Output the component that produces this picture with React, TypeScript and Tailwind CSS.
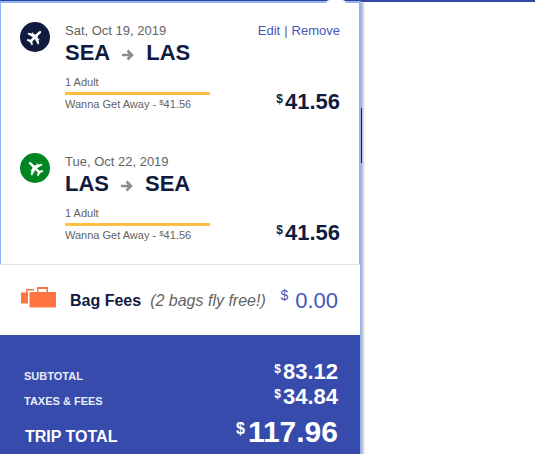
import type { ReactNode } from "react";

type Flight = {
  date: string;
  from: string;
  to: string;
  fare: string;
  color: string;
  turn: string;
  editable: boolean;
};

const flights: Flight[] = [
  { date: "Sat, Oct 19, 2019", from: "SEA", to: "LAS", fare: "41.56", color: "bg-[#111b40]", turn: "rotate-45", editable: true },
  { date: "Tue, Oct 22, 2019", from: "LAS", to: "SEA", fare: "41.56", color: "bg-[#008522]", turn: "-rotate-45", editable: false },
];

function Plane({ turn }: { turn: string }) {
  return (
    <svg viewBox="0 0 24 24" className={"size-[18px] " + turn} fill="white" aria-hidden="true">
      <path d="M12 1C10.900 1 10.300 2.300 10.300 3.600V9L2 14v2.400l8.300-2.300v4.800L7 21v1.900l5-1.200 5 1.200V21l-3.300-2.100v-4.800l8.300 2.300V14l-8.300-5V3.600C13.700 2.300 13.100 1 12 1z" />
      <path d="M5.600 9.600H7v2.600H5.600zM17 9.600h1.400v2.600H17z" />
    </svg>
  );
}

function Arrow() {
  return (
    <svg viewBox="0 0 12 12" className="mt-1 size-3" fill="none" stroke="#8c8c8c" strokeWidth="2.600" aria-hidden="true">
      <path d="M0 6h10M5.500 1.500L10 6l-4.500 4.500" />
    </svg>
  );
}

function Money({ value, className }: { value: string; className: string }) {
  return (
    <span className={"flex items-start font-bold " + className}>
      <span className="mr-0.5 text-xs leading-[18px]">$</span>
      <span className="text-[22px] leading-6">{value}</span>
    </span>
  );
}

function FlightRow({ flight }: { flight: Flight }) {
  return (
    <article className="flex h-[131px] px-[19px]">
      <span className={"mr-[15px] flex size-[30px] shrink-0 items-center justify-center rounded-full " + flight.color}>
        <Plane turn={flight.turn} />
      </span>
      <div className="flex min-w-0 grow flex-col pt-px">
        <div className="flex justify-between text-[13px] leading-4 text-[#636363]">
          <span>{flight.date}</span>
          {flight.editable && (
            <span className="flex gap-1">
              <a href="#edit" className="text-[#4257bb]">Edit</a>
              <span>|</span>
              <a href="#remove" className="text-[#4257bb]">Remove</a>
            </span>
          )}
        </div>
        <h2 className="flex items-center text-[22px] leading-7 font-bold text-[#111b40]">
          <span className="mr-3">{flight.from}</span>
          <Arrow />
          <span className="ml-3">{flight.to}</span>
        </h2>
        <div className="mt-[7px] flex items-start justify-between text-[11px] text-[#636363]">
          <div className="w-[145px]">
            <p className="border-b-3 border-[#ffbf44] pb-0.5 leading-4">1 Adult</p>
            <p className="pt-px leading-4">
              Wanna Get Away - <span className="align-[3px] text-[8px] leading-none">$</span>41.56
            </p>
          </div>
          <Money value={flight.fare} className="mt-4 text-[#111b40]" />
        </div>
      </div>
    </article>
  );
}

function Suitcases() {
  return (
    <svg viewBox="0 0 36 22" className="mb-1.5 h-[22px] w-9" fill="#ff7541" aria-hidden="true">
      <path d="M0 6.500h7v11H1a1 1 0 0 1-1-1zM5 3h8v1.500H6.500v2H5z" />
      <path d="M16 1h11v5h-1.500V3h-8v3H16z" />
      <rect x="8.500" y="6" width="26.500" height="15.500" rx="1" />
    </svg>
  );
}

function TotalRow({ label, children }: { label: string; children: ReactNode }) {
  return (
    <div className="flex h-[25px] items-center justify-between">
      <dt className="pt-2 text-[11px] leading-4 font-bold text-[#e8ebf8]">{label}</dt>
      <dd>{children}</dd>
    </div>
  );
}

export default function App() {
  return (
    <div className="relative min-h-screen overflow-hidden bg-white font-['Liberation_Sans',Arial,sans-serif]">
      <div className="h-px bg-[#304ba0]" />
      <div className="absolute top-0 right-0 left-[361px] h-0.5 bg-[#3447a8]" />
      <div className="absolute top-[108px] left-[361px] z-10 h-[55px] w-px bg-[#111b40]" />
      <main className="relative w-[361px] border-x border-t-2 border-r-2 border-[#8fb4f8] shadow-[2px_1px_3px_rgba(0,0,0,0.35)]">
        <div className="absolute -top-[3px] left-[325px] h-[5px] w-5 rounded-t bg-white" />
        <section className="pt-[19px]">
          {flights.map((flight) => (
            <FlightRow key={flight.date} flight={flight} />
          ))}
        </section>
        <section className="-mr-px -ml-px -mt-5 flex h-[71px] items-center border-t border-[#e2e2e2] bg-white pr-[22px] pl-[21px]">
          <Suitcases />
          <h3 className="mt-0.5 ml-[13px] font-bold text-[#111b40]">Bag Fees</h3>
          <em className="mt-0.5 ml-[9px] grow text-[#636363]">(2 bags fly free!)</em>
          <span className="mt-0.5 flex items-start text-[#4257bb]">
            <span className="mr-[7px] text-sm leading-3">$</span>
            <span className="text-[22px] leading-6">0.00</span>
          </span>
        </section>
        <dl className="-mx-px bg-[#364bab] pt-6 pr-[22px] pb-1 pl-6 text-white">
          <TotalRow label="SUBTOTAL"><Money value="83.12" className="text-white" /></TotalRow>
          <TotalRow label="TAXES &amp; FEES"><Money value="34.84" className="text-white" /></TotalRow>
          <div className="flex h-[45px] items-center justify-between">
            <dt className="pt-2.5 pl-px text-base font-bold">TRIP TOTAL</dt>
            <dd className="flex items-start font-bold">
              <span className="mr-[3px] text-base leading-[26px]">$</span>
              <span className="text-[30px] leading-8">117.96</span>
            </dd>
          </div>
        </dl>
      </main>
    </div>
  );
}
